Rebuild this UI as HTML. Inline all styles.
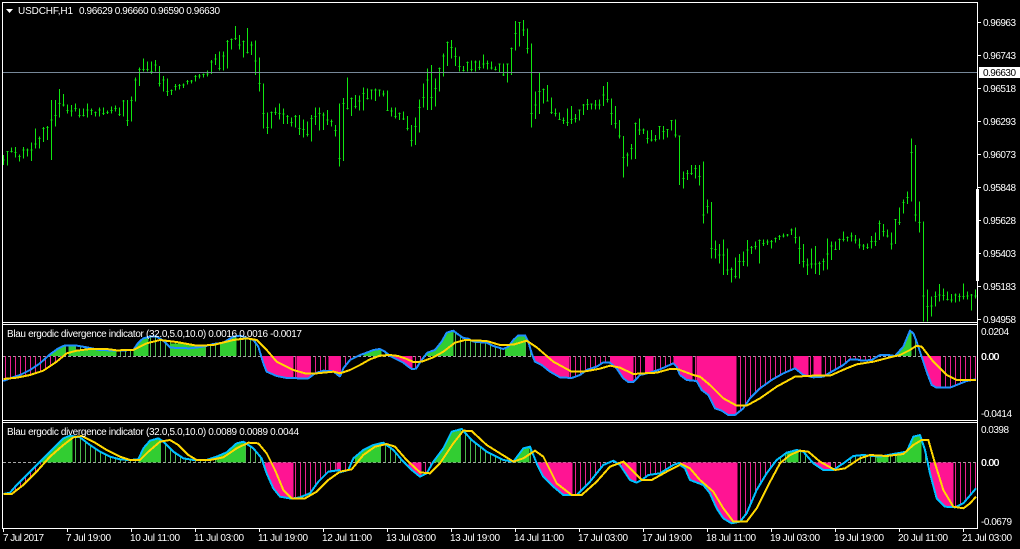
<!DOCTYPE html>
<html><head><meta charset="utf-8"><title>USDCHF,H1</title>
<style>
html,body{margin:0;padding:0;background:#000;width:1020px;height:549px;overflow:hidden}
svg{display:block}
text{font-family:"Liberation Sans",sans-serif;font-size:10px;fill:#fff}
.b{fill:none;stroke:#10e810;stroke-width:3}
.l1{fill:none;stroke:#1e90ff;stroke-width:6;stroke-linejoin:round}
.l2{fill:none;stroke:#00bfff;stroke-width:6;stroke-linejoin:round}
.y{fill:none;stroke:#ffd700;stroke-width:6;stroke-linejoin:round}
.g{fill:#32cd32}.p{fill:#ff1493}
</style></head><body>
<svg width="1020" height="549" viewBox="0 0 1020 549" xmlns="http://www.w3.org/2000/svg" shape-rendering="crispEdges">
<defs>
<pattern id="sg" patternUnits="userSpaceOnUse" width="15" height="30"><rect x="0" y="0" width="3" height="30" fill="#4cb84c"/></pattern>
<pattern id="sp" patternUnits="userSpaceOnUse" width="15" height="30"><rect x="0" y="0" width="3" height="30" fill="#e8208f"/></pattern>
</defs>
<rect width="1020" height="549" fill="#000"/>

<!-- price bars -->
<g transform="translate(.1667 0) scale(.33333)"><path class="b" d="M10 465V495M7 480h6M22 453V497M19 455h6M34 443V458M31 455h6M46 441V472M43 458h6M58 463V485M55 470h6M70 441V475M67 450h6M82 446V470M79 450h6M94 428V483M91 450h6M106 385V445M103 432h6M118 410V446M115 416h6M130 381V426M127 385h6M142 378V420M139 383h6M154 300V480M151 360h6M166 300V380M163 347h6M178 267V352M175 310h6M190 282V320M187 315h6M202 314V340M199 332h6M214 315V350M211 333h6M226 310V335M223 326h6M238 325V353M235 346h6M250 325V350M247 346h6M262 310V353M259 330h6M274 325V345M271 332h6M286 335V350M283 338h6M298 322V350M295 330h6M310 322V345M307 340h6M322 332V342M319 337h6M334 320V340M331 332h6M346 316V335M343 326h6M358 322V348M355 343h6M370 300V350M367 303h6M382 300V378M379 362h6M394 290V365M391 302h6M406 232V305M403 240h6M418 202V258M415 208h6M430 175V215M427 208h6M442 185V215M439 208h6M454 185V222M451 215h6M466 180V215M463 195h6M478 198V260M475 250h6M490 228V275M487 240h6M502 235V288M499 275h6M514 268V285M511 272h6M526 252V272M523 260h6M538 252V268M535 257h6M550 250V264M547 255h6M562 240V254M559 245h6M574 240V250M571 243h6M586 225V245M583 230h6M598 222V235M595 228h6M610 220V232M607 224h6M622 212V230M619 222h6M634 180V222M631 186h6M646 162V195M643 177h6M658 155V212M655 205h6M670 155V212M667 168h6M682 120V205M679 125h6M694 115V148M691 118h6M706 78V120M703 115h6M718 105V148M715 135h6M730 122V172M727 125h6M742 84V160M739 158h6M754 125V165M751 135h6M766 122V225M763 183h6M778 172V275M775 250h6M790 250V385M787 340h6M802 338V402M799 382h6M814 335V385M811 338h6M826 322V345M823 338h6M838 310V358M835 340h6M850 325V372M847 342h6M862 345V372M859 350h6M874 352V380M871 367h6M886 345V382M883 350h6M898 345V405M895 385h6M910 358V412M907 388h6M922 365V410M919 403h6M934 345V425M931 355h6M946 322V375M943 350h6M958 322V392M955 340h6M970 338V390M967 345h6M982 330V375M979 360h6M994 358V380M991 365h6M1006 375V410M1003 392h6M1018 310V500M1015 475h6"/></g>
<g transform="translate(340.1667 0) scale(.33333)"><path class="b" d="M10 294V483M7 310h6M22 232V328M19 326h6M34 292V348M31 295h6M46 285V325M43 320h6M58 286V332M55 303h6M70 262V332M67 280h6M82 265V298M79 295h6M94 268V298M91 270h6M106 265V303M103 270h6M118 268V290M115 270h6M130 272V290M127 282h6M142 272V332M139 331h6M154 322V350M151 333h6M166 322V355M163 349h6M178 338V360M175 340h6M190 335V360M187 357h6M202 348V392M199 385h6M214 375V440M211 422h6M226 352V435M223 380h6M238 298V398M235 322h6M250 250V322M247 292h6M262 205V330M259 240h6M274 195V330M271 292h6M286 235V320M283 265h6M298 202V275M295 205h6M310 160V230M307 168h6M322 125V198M319 127h6M334 120V175M331 142h6M346 142V198M343 170h6M358 170V215M355 200h6M370 198V215M367 212h6M382 185V215M379 188h6M394 182V215M391 208h6M406 182V215M403 186h6M418 182V210M415 202h6M430 163V205M427 192h6M442 182V208M439 190h6M454 185V208M451 204h6M466 200V212M463 208h6M478 190V217M475 192h6M490 190V228M487 225h6M502 192V248M499 192h6M514 142V225M511 145h6M526 63V152M523 100h6M538 67V140M535 68h6M550 60V108M547 90h6M562 85V160M559 145h6M574 130V383M571 340h6M586 275V357M583 315h6M598 218V342M595 275h6M610 265V310M607 268h6M622 255V305M619 303h6M634 292V342M631 338h6M646 325V350M643 340h6M658 338V360M655 358h6M670 352V372M667 362h6M682 325V378M679 368h6M694 318V372M691 358h6M706 342V368M703 355h6M718 328V362M715 330h6M730 312V345M727 315h6M742 297V330M739 313h6M754 310V328M751 312h6M766 300V328M763 315h6M778 298V328M775 315h6M790 258V318M787 285h6M802 246V308M799 298h6M814 295V375M811 340h6M826 318V385M823 370h6M838 360V415M835 408h6M850 408V533M847 472h6M862 458V500M859 465h6M874 432V478M871 445h6M886 367V477M883 370h6M898 355V405M895 390h6M910 385V402M907 390h6M922 392V430M919 415h6M934 390V425M931 420h6M946 405V425M943 418h6M958 380V418M955 380h6M970 378V418M967 395h6M982 388V412M979 388h6M994 362V392M991 362h6M1006 358V412M1003 405h6M1018 408V555M1015 408h6"/></g>
<g transform="translate(680.1667 180) scale(.33333)"><path class="b" d="M10 -25V25M7 -5h6M22 -30V0M19 -20h6M34 -45V-15M31 -20h6M46 -45V-5M43 -35h6M58 -45V17M55 -10h6M70 -55V130M67 105h6M82 58V100M79 80h6M94 66V235M91 205h6M106 182V235M103 208h6M118 192V250M115 225h6M130 178V285M127 225h6M142 205V285M139 270h6M154 262V308M151 268h6M166 232V295M163 290h6M178 222V295M175 245h6M190 215V258M187 245h6M202 180V260M199 210h6M214 198V222M211 203h6M226 185V208M223 200h6M238 178V250M235 182h6M250 178V198M247 190h6M262 178V195M259 186h6M274 180V205M271 184h6M286 172V188M283 175h6M298 165V180M295 170h6M310 160V172M307 168h6M322 162V170M319 165h6M334 145V165M331 150h6M346 142V190M343 172h6M358 170V252M355 205h6M370 192V262M367 245h6M382 235V285M379 255h6M394 205V265M391 252h6M406 198V282M403 252h6M418 245V285M415 250h6M430 235V272M427 245h6M442 175V268M439 222h6M454 185V240M451 198h6M466 185V210M463 208h6M478 175V210M475 178h6M490 155V185M487 178h6M502 170V185M499 172h6M514 157V185M511 168h6M526 165V190M523 180h6M538 175V205M535 195h6M550 192V210M547 198h6M562 190V207M559 202h6M574 168V205M571 185h6M586 158V198M583 185h6M598 122V180M595 130h6M610 132V170M607 155h6M622 148V172M619 168h6M634 158V208M631 192h6M646 118V192M643 118h6M658 82V135M655 128h6M670 58V100M667 68h6M682 35V72M679 52h6M694 -125V65M691 -83h6M706 -105V125M703 105h6M718 65V158M715 128h6M730 125V425M727 348h6M742 328V425M739 380h6M754 350V410M751 378h6M766 335V380M763 350h6M778 312V365M775 345h6M790 325V362M787 347h6M802 335V362M799 358h6M814 342V368M811 360h6M826 340V368M823 345h6M838 340V365M835 350h6M850 310V358M847 350h6M862 335V358M859 348h6M874 342V392M871 345h6M886 328V355M883 348h6"/></g>

<!-- current price line -->
<rect x="3" y="72" width="974" height="1" fill="#778899"/>

<!-- zero lines -->
<line x1="3" y1="356.5" x2="976" y2="356.5" stroke="#a6a6a6" stroke-dasharray="3 2"/>
<line x1="3" y1="462.5" x2="976" y2="462.5" stroke="#a6a6a6" stroke-dasharray="3 2"/>

<!-- indicator 1 left -->
<g transform="translate(0 320) scale(.33333)">
<clipPath id="a1"><polygon points="10,108 10,183 30,175 60,165 90,150 120,130 150,103 175,85 195,76 225,76 260,82 300,90 350,92 400,90 415,68 430,55 450,50 470,50 490,62 510,82 530,84 570,85 610,80 640,72 670,68 700,50 720,47 760,60 775,80 790,130 800,155 830,168 860,174 900,175 925,175 945,160 970,152 1000,154 1020,170 1020,108"/><polygon points="10,108 10,177 50,173 90,165 130,152 170,125 200,100 230,92 270,87 320,87 350,91 400,90 440,70 480,60 530,66 590,77 640,75 700,60 740,55 770,60 780,108"/></clipPath>
<g clip-path="url(#a1)"><rect x="10" y="-20" width="1010" height="128" fill="url(#sg)"/><rect x="10" y="108" width="1010" height="120" fill="url(#sp)"/>
<rect class="g" x="150" y="-20" width="45" height="128"/><rect class="g" x="205" y="-20" width="20" height="128"/><rect class="g" x="225" y="90" width="125" height="18"/><rect class="g" x="400" y="-20" width="45" height="128"/><rect class="g" x="510" y="70" width="105" height="38"/><rect class="g" x="660" y="-20" width="50" height="128"/>
<rect class="p" x="785" y="108" width="95" height="120"/><rect class="p" x="890" y="108" width="40" height="120"/><rect class="p" x="985" y="108" width="35" height="120"/></g>
<polyline class="l1" points="10,183 30,175 60,165 90,150 120,130 150,103 175,85 195,76 225,76 260,82 300,90 350,92 400,90 415,68 430,55 450,50 470,50 490,62 510,82 530,84 570,85 610,80 640,72 670,68 700,50 720,47 760,60 775,80 790,130 800,155 830,168 860,174 900,175 925,175 945,160 970,152 1000,154 1020,170"/>
<polyline class="y" points="10,177 50,173 90,165 130,152 170,125 200,100 230,92 270,87 320,87 350,91 400,90 440,70 480,60 530,66 590,77 640,75 700,60 740,55 770,60 800,90 830,125 880,150 915,160 950,160 1000,155 1020,160"/>
</g>
<!-- indicator 1 mid -->
<g transform="translate(340 320) scale(.33333)">
<clipPath id="a2"><polygon points="0,108 0,170 10,145 30,120 60,105 75,100 100,90 120,87 135,95 150,108 170,118 190,128 205,140 215,147 228,146 245,120 262,98 285,90 305,65 320,38 340,32 350,40 370,54 385,56 400,65 440,68 460,78 490,87 505,80 520,60 535,46 555,46 565,65 575,100 585,125 605,135 630,155 660,172 695,174 720,165 740,150 770,140 790,127 810,128 830,145 850,175 865,186 880,186 900,165 930,158 960,148 1000,130 1010,140 1020,165 1020,108"/></clipPath>
<g clip-path="url(#a2)"><rect x="0" y="-20" width="1020" height="128" fill="url(#sg)"/><rect x="0" y="108" width="1020" height="120" fill="url(#sp)"/>
<rect class="g" x="70" y="-20" width="55" height="128"/><rect class="g" x="260" y="-20" width="80" height="128"/><rect class="g" x="495" y="-20" width="60" height="128"/>
<rect class="p" x="160" y="108" width="58" height="120"/><rect class="p" x="580" y="108" width="108" height="120"/><rect class="p" x="810" y="108" width="70" height="120"/><rect class="p" x="915" y="108" width="25" height="120"/><rect class="p" x="1000" y="108" width="20" height="120"/></g>
<polyline class="l1" points="0,170 10,145 30,120 60,105 75,100 100,90 120,87 135,95 150,108 170,118 190,128 205,140 215,147 228,146 245,120 262,98 285,90 305,65 320,38 340,32 350,40 370,54 385,56 400,65 440,68 460,78 490,87 505,80 520,60 535,46 555,46 565,65 575,100 585,125 605,135 630,155 660,172 695,174 720,165 740,150 770,140 790,127 810,128 830,145 850,175 865,186 880,186 900,165 930,158 960,148 1000,130 1010,140 1020,165"/>
<polyline class="y" points="0,160 30,150 60,135 90,118 120,107 150,105 175,108 200,117 220,126 245,125 280,112 310,95 345,68 375,60 440,63 480,75 520,74 560,62 590,82 640,125 695,155 730,155 780,146 810,137 840,143 880,162 910,160 950,158 990,147 1020,148"/>
</g>
<!-- indicator 1 right -->
<g transform="translate(680 320) scale(.33333)">
<clipPath id="a3"><polygon points="0,108 0,165 20,180 50,183 65,210 85,225 105,265 125,272 145,285 165,285 190,265 210,235 240,205 275,180 310,160 345,145 370,165 400,172 430,170 455,155 490,135 510,118 530,118 545,122 575,120 600,105 625,105 645,108 670,80 690,32 700,40 710,65 725,110 740,155 755,195 770,203 810,203 830,195 860,183 888,178 888,108"/></clipPath>
<g clip-path="url(#a3)"><rect x="0" y="0" width="888" height="108" fill="url(#sg)"/><rect x="0" y="108" width="888" height="200" fill="url(#sp)"/>
<rect class="g" x="640" y="0" width="55" height="108"/>
<rect class="p" x="0" y="108" width="38" height="200"/><rect class="p" x="50" y="108" width="120" height="200"/><rect class="p" x="340" y="108" width="45" height="200"/><rect class="p" x="400" y="108" width="25" height="200"/><rect class="p" x="725" y="108" width="57" height="200"/></g>
<polyline class="l1" points="0,165 20,180 50,183 65,210 85,225 105,265 125,272 145,285 165,285 190,265 210,235 240,205 275,180 310,160 345,145 370,165 400,172 430,170 455,155 490,135 510,118 530,118 545,122 575,120 600,105 625,105 645,108 670,80 690,32 700,40 710,65 725,110 740,155 755,195 770,203 810,203 830,195 860,183 888,178"/>
<polyline class="y" points="0,150 40,165 60,170 90,195 130,235 170,257 200,257 240,235 290,200 345,170 400,167 450,167 500,145 530,133 580,125 630,112 660,105 690,90 710,77 725,80 760,125 800,165 830,180 888,180"/>
</g>

<!-- indicator 2 left -->
<g transform="translate(0 420) scale(.33333)">
<clipPath id="b1"><polygon points="10,127 10,222 30,218 50,195 80,165 110,135 130,115 160,85 190,55 210,47 240,52 270,75 300,95 330,110 360,118 390,120 415,118 430,85 450,62 475,55 490,65 520,95 550,115 580,120 620,120 650,110 680,97 710,70 730,65 760,85 785,115 800,160 820,205 840,230 875,236 900,232 930,220 955,185 985,155 1020,150 1020,127"/><polygon points="10,127 10,222 35,222 70,195 110,155 125,127"/></clipPath>
<g clip-path="url(#b1)"><rect x="10" y="0" width="1010" height="127" fill="url(#sg)"/><rect x="10" y="127" width="1010" height="150" fill="url(#sp)"/>
<rect class="g" x="120" y="0" width="98" height="127"/><rect class="g" x="415" y="0" width="67" height="127"/><rect class="g" x="650" y="0" width="85" height="127"/>
<rect class="p" x="795" y="127" width="85" height="150"/><rect class="p" x="1010" y="127" width="10" height="150"/></g>
<polyline class="l2" points="10,222 30,218 50,195 80,165 110,135 130,115 160,85 190,55 210,47 240,52 270,75 300,95 330,110 360,118 390,120 415,118 430,85 450,62 475,55 490,65 520,95 550,115 580,120 620,120 650,110 680,97 710,70 730,65 760,85 785,115 800,160 820,205 840,230 875,236 900,232 930,220 955,185 985,155 1020,150"/>
<polyline class="y" points="10,222 35,222 70,195 110,155 150,110 190,75 220,52 245,48 280,65 320,90 360,110 390,120 420,120 445,95 480,65 510,60 535,75 565,105 590,120 630,120 670,112 710,85 745,68 775,70 800,100 825,150 850,210 875,235 915,235 950,215 985,180 1020,155"/>
</g>
<!-- indicator 2 mid -->
<g transform="translate(340 420) scale(.33333)">
<clipPath id="b2"><polygon points="0,127 0,157 25,150 40,115 70,90 100,75 130,68 160,90 190,125 215,150 240,170 260,160 280,125 310,85 335,35 365,27 395,60 440,95 490,120 520,125 550,85 570,80 590,130 610,170 640,200 670,225 710,225 750,185 790,135 820,122 840,135 870,180 890,188 905,180 925,165 960,160 1000,135 1020,128 1020,127"/></clipPath>
<g clip-path="url(#b2)"><rect x="0" y="0" width="1020" height="127" fill="url(#sg)"/><rect x="0" y="127" width="1020" height="150" fill="url(#sp)"/>
<rect class="g" x="45" y="0" width="77" height="127"/><rect class="g" x="280" y="0" width="82" height="127"/><rect class="g" x="530" y="0" width="38" height="127"/>
<rect class="p" x="205" y="127" width="40" height="150"/><rect class="p" x="590" y="127" width="108" height="150"/><rect class="p" x="845" y="127" width="45" height="150"/></g>
<polyline class="l2" points="0,157 25,150 40,115 70,90 100,75 130,68 160,90 190,125 215,150 240,170 260,160 280,125 310,85 335,35 365,27 395,60 440,95 490,120 520,125 550,85 570,80 590,130 610,170 640,200 670,225 710,225 750,185 790,135 820,122 840,135 870,180 890,188 905,180 925,165 960,160 1000,135 1020,128"/>
<polyline class="y" points="0,155 35,148 70,105 105,80 140,72 165,80 200,120 240,157 270,160 300,130 340,70 370,32 395,33 440,75 480,100 520,125 550,115 585,92 610,110 650,190 695,225 725,225 770,185 810,140 850,125 880,155 905,180 935,180 980,155 1020,135"/>
</g>
<!-- indicator 2 right -->
<g transform="translate(680 420) scale(.33333)">
<clipPath id="b3"><polygon points="0,127 0,135 15,145 30,180 70,195 90,220 110,265 130,295 155,310 180,305 200,280 230,210 260,160 290,120 320,98 350,90 370,95 400,130 430,150 460,150 490,130 520,108 550,105 600,110 640,102 680,95 700,50 720,45 735,90 750,160 770,235 795,260 825,262 850,250 888,205 888,127"/></clipPath>
<g clip-path="url(#b3)"><rect x="0" y="0" width="888" height="127" fill="url(#sg)"/><rect x="0" y="127" width="888" height="200" fill="url(#sp)"/>
<rect class="g" x="320" y="0" width="35" height="127"/><rect class="g" x="590" y="0" width="35" height="127"/><rect class="g" x="650" y="0" width="75" height="127"/>
<rect class="p" x="0" y="127" width="172" height="200"/><rect class="p" x="400" y="127" width="50" height="200"/><rect class="p" x="750" y="127" width="70" height="200"/></g>
<polyline class="l2" points="0,135 15,145 30,180 70,195 90,220 110,265 130,295 155,310 180,305 200,280 230,210 260,160 290,120 320,98 350,90 370,95 400,130 430,150 460,150 490,130 520,108 550,105 600,110 640,102 680,95 700,50 720,45 735,90 750,160 770,235 795,260 825,262 850,250 888,205"/>
<polyline class="y" points="0,130 30,145 60,180 100,215 130,265 160,305 200,305 230,265 265,195 300,130 330,105 360,92 385,95 420,125 465,150 495,145 540,115 570,105 620,108 670,102 700,75 725,60 745,60 765,130 790,210 820,260 850,265 870,250 888,230"/>
</g>

<!-- frame -->
<g fill="#fff">
<rect x="2" y="2" width="976" height="1"/>
<rect x="2" y="2" width="1" height="527"/>
<rect x="977" y="2" width="1" height="527"/>
<rect x="2" y="322" width="976" height="1"/>
<rect x="2" y="324" width="976" height="1"/>
<rect x="2" y="420" width="976" height="1"/>
<rect x="2" y="422" width="976" height="1"/>
<rect x="2" y="528" width="976" height="1"/>
<rect x="976" y="189" width="3" height="92"/>
<!-- price ticks -->
<rect x="978" y="22" width="3" height="1"/><rect x="978" y="55" width="3" height="1"/><rect x="978" y="88" width="3" height="1"/><rect x="978" y="121" width="3" height="1"/><rect x="978" y="154" width="3" height="1"/><rect x="978" y="187" width="3" height="1"/><rect x="978" y="220" width="3" height="1"/><rect x="978" y="253" width="3" height="1"/><rect x="978" y="286" width="3" height="1"/><rect x="978" y="319" width="3" height="1"/>
<!-- time ticks -->
<rect x="3" y="529" width="1" height="3"/><rect x="67" y="529" width="1" height="3"/><rect x="131" y="529" width="1" height="3"/><rect x="195" y="529" width="1" height="3"/><rect x="259" y="529" width="1" height="3"/><rect x="323" y="529" width="1" height="3"/><rect x="387" y="529" width="1" height="3"/><rect x="451" y="529" width="1" height="3"/><rect x="515" y="529" width="1" height="3"/><rect x="579" y="529" width="1" height="3"/><rect x="643" y="529" width="1" height="3"/><rect x="707" y="529" width="1" height="3"/><rect x="771" y="529" width="1" height="3"/><rect x="835" y="529" width="1" height="3"/><rect x="899" y="529" width="1" height="3"/><rect x="963" y="529" width="1" height="3"/>
</g>
<polygon points="6,9 13,9 9.5,13" fill="#fff" shape-rendering="auto"/>

<!-- labels -->
<g shape-rendering="auto">
<text x="18" y="14" textLength="55">USDCHF,H1</text>
<text x="79" y="14" textLength="141">0.96629 0.96660 0.96590 0.96630</text>
<text x="7" y="337" textLength="295">Blau ergodic divergence indicator (32.0,5.0,10.0) 0.0016 0.0016 -0.0017</text>
<text x="7" y="435" textLength="292">Blau ergodic divergence indicator (32.0,5.0,10.0) 0.0089 0.0089 0.0044</text>

<text x="983" y="26" textLength="33">0.96963</text>
<text x="983" y="59" textLength="33">0.96743</text>
<text x="983" y="92" textLength="33">0.96518</text>
<text x="983" y="125" textLength="33">0.96293</text>
<text x="983" y="158" textLength="33">0.96073</text>
<text x="983" y="191" textLength="33">0.95848</text>
<text x="983" y="224" textLength="33">0.95628</text>
<text x="983" y="257" textLength="33">0.95403</text>
<text x="983" y="290" textLength="33">0.95183</text>
<text x="983" y="323" textLength="33">0.94958</text>
<rect x="979" y="67" width="41" height="11" fill="#fff"/>
<text x="983" y="76" textLength="33" style="fill:#000">0.96630</text>

<text x="981" y="335" textLength="28">0.0204</text>
<text x="981" y="360" textLength="18">0.00</text>
<text x="981.4" y="360" textLength="18">0.00</text>
<text x="981" y="417" textLength="31">-0.0414</text>
<text x="981" y="433" textLength="28">0.0398</text>
<text x="981" y="466" textLength="18">0.00</text>
<text x="981.4" y="466" textLength="18">0.00</text>
<text x="981" y="525" textLength="31">-0.0679</text>

<text x="3" y="541" textLength="41">7 Jul 2017</text>
<text x="66" y="541" textLength="45">7 Jul 19:00</text>
<text x="130" y="541" textLength="50">10 Jul 11:00</text>
<text x="194" y="541" textLength="50">11 Jul 03:00</text>
<text x="258" y="541" textLength="50">11 Jul 19:00</text>
<text x="322" y="541" textLength="50">12 Jul 11:00</text>
<text x="386" y="541" textLength="50">13 Jul 03:00</text>
<text x="450" y="541" textLength="50">13 Jul 19:00</text>
<text x="514" y="541" textLength="50">14 Jul 11:00</text>
<text x="578" y="541" textLength="50">17 Jul 03:00</text>
<text x="642" y="541" textLength="50">17 Jul 19:00</text>
<text x="706" y="541" textLength="50">18 Jul 11:00</text>
<text x="770" y="541" textLength="50">19 Jul 03:00</text>
<text x="834" y="541" textLength="50">19 Jul 19:00</text>
<text x="898" y="541" textLength="50">20 Jul 11:00</text>
<text x="962" y="541" textLength="50">21 Jul 03:00</text>
</g>
</svg>
</body></html>
